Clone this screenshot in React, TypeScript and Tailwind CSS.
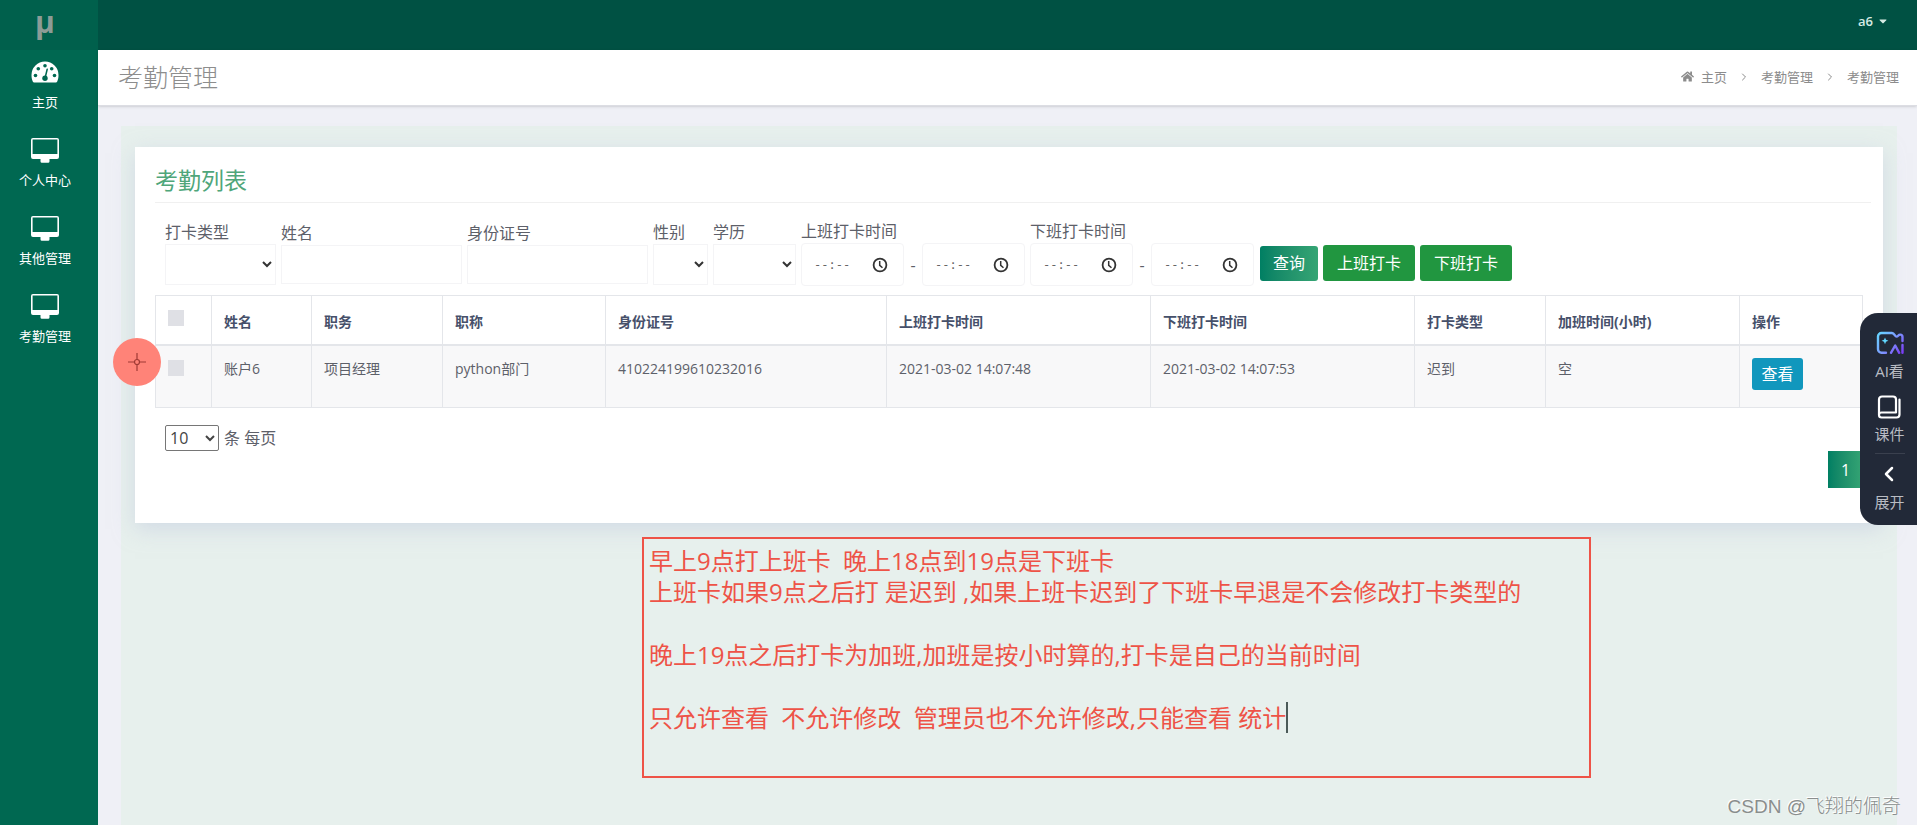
import React from "react";
import { FaHome, FaCaretDown } from "react-icons/fa";
import { ChevronLeft, ChevronRight } from "lucide-react";

function GaugeIcon() {
  return (
    <svg viewBox="0 0 28 22" className="h-[22px] w-7" aria-hidden="true">
      <path d="M14 .5A13.500 13.500 0 0 0 .5 14c0 2.600.5 5 1.400 6.700.2.500.6.800 1.200.8h21.800c.6 0 1-.3 1.200-.8.900-1.700 1.400-4.100 1.400-6.700A13.500 13.500 0 0 0 14 .5Z" fill="#fff" />
      <g fill="#006851">
        <circle cx="4.500" cy="14.500" r="1.800" />
        <circle cx="7.300" cy="7.700" r="1.800" />
        <circle cx="14" cy="4.700" r="1.800" />
        <circle cx="20.700" cy="7.700" r="1.800" />
        <circle cx="23.500" cy="14.500" r="1.800" />
        <circle cx="14" cy="17.200" r="2.700" />
      </g>
      <path d="M14.200 16.500l2-8.300" stroke="#006851" strokeWidth="1.500" strokeLinecap="round" />
    </svg>
  );
}

function MonitorIcon() {
  return (
    <svg viewBox="0 0 28 25" className="h-[25px] w-7" fill="currentColor" aria-hidden="true">
      <path
        fillRule="evenodd"
        d="M2 0h24a2 2 0 0 1 2 2v17a2 2 0 0 1-2 2h-7.500v2.200a1.500 1.500 0 0 1-1 1.600h-7a1.500 1.500 0 0 1-1-1.600V21H2a2 2 0 0 1-2-2V2a2 2 0 0 1 2-2Zm-.4 1.600v14.300h24.800v-14.300H1.600Z"
      />
    </svg>
  );
}

function ClockIcon() {
  return (
    <svg viewBox="0 0 16 16" className="size-4 shrink-0" fill="none" stroke="#333" strokeWidth="1.800" aria-hidden="true">
      <circle cx="8" cy="8" r="6.400" />
      <path d="M7.700 4v4.300l2.800 2.500" strokeWidth="1.500" />
    </svg>
  );
}

function AiIcon() {
  return (
    <svg viewBox="0 0 28 24" className="h-6 w-7" fill="none" strokeWidth="2.400" strokeLinecap="round" strokeLinejoin="round" aria-hidden="true">
      <defs>
        <linearGradient id="ai" x1="0" y1="0" x2="28" y2="24" gradientUnits="userSpaceOnUse">
          <stop offset="0" stopColor="#62e0ff" />
          <stop offset="0.500" stopColor="#7d9bff" />
          <stop offset="1" stopColor="#7a2cf5" />
        </linearGradient>
      </defs>
      <g stroke="url(#ai)">
        <path d="M10 21.800H5.500A3.500 3.500 0 0 1 2 18.300V5.500A3.500 3.500 0 0 1 5.500 2h10.500c2.600 0 2.800 3.600 4.600 3.600 1.500 0 1.600-2 3.600-2 1.600 0 2.300 1 2.300 2.400v4" />
        <path d="M15 21.800l4.200-7.300 4 7.300M26.500 14v7.800" />
      </g>
      <path d="M9 6.400l1 2.400 2.400 1-2.400 1-1 2.400-1-2.400-2.400-1 2.400-1z" fill="#62d8ff" />
    </svg>
  );
}

function BookIcon() {
  return (
    <svg viewBox="0 0 24 24" className="size-6" fill="none" stroke="#fff" strokeWidth="2.200" strokeLinecap="round" strokeLinejoin="round" aria-hidden="true">
      <path d="M2 20V4.500a3 3 0 0 1 3-3h11a3 3 0 0 1 3 3V17.500H4.500A2.500 2.500 0 0 0 2 20a2.500 2.500 0 0 0 2.500 2.500H19.500a3 3 0 0 0 3-3V4.500" />
    </svg>
  );
}

const navItems = ["主页", "个人中心", "其他管理", "考勤管理"];

const columns = [
  { title: "姓名", value: "账户6", width: "w-[100px]" },
  { title: "职务", value: "项目经理", width: "w-[131px]" },
  { title: "职称", value: "python部门", width: "w-[163px]" },
  { title: "身份证号", value: "410224199610232016", width: "w-[281px]" },
  { title: "上班打卡时间", value: "2021-03-02 14:07:48", width: "w-[264px]" },
  { title: "下班打卡时间", value: "2021-03-02 14:07:53", width: "w-[264px]" },
  { title: "打卡类型", value: "迟到", width: "w-[131px]" },
  { title: "加班时间(小时)", value: "空", width: "w-[194px]" },
];

function SelectField({ id, label, width }: { id: string; label: string; width: string }) {
  return (
    <div className="flex flex-col">
      <label htmlFor={id} className="leading-6">{label}</label>
      <select id={id} className={`h-[41px] border border-[#f4f4f6] bg-white text-[#333] ${width}`}>
        <option value=""></option>
      </select>
    </div>
  );
}

function TextField({ id, label }: { id: string; label: string }) {
  return (
    <div className="flex flex-col">
      <label htmlFor={id} className="leading-6">{label}</label>
      <input id={id} type="text" className="h-[39px] w-[181px] border border-[#f4f4f6] bg-white px-3" />
    </div>
  );
}

function TimeInput({ id, label }: { id: string; label?: string }) {
  return (
    <span className="flex h-[43px] w-[103px] items-center rounded border border-[#f4f4f6] bg-white pr-[15px] pl-3">
      <input
        id={id}
        type="text"
        placeholder="--:--"
        aria-label={label}
        className="w-full min-w-0 bg-transparent font-['DejaVu_Sans_Mono',monospace] text-xs text-[#666] placeholder:text-[#666]"
      />
      <ClockIcon />
    </span>
  );
}

function TimeRange({ id, label }: { id: string; label: string }) {
  return (
    <div className="flex flex-col">
      <label htmlFor={id} className="leading-6">{label}</label>
      <div className="flex items-center">
        <TimeInput id={id} />
        <span className="w-[18px] text-center">-</span>
        <TimeInput id={`${id}-end`} label={`${label} -`} />
      </div>
    </div>
  );
}

function TickBox({ label }: { label: string }) {
  return <input type="checkbox" aria-label={label} className="block size-4 appearance-none bg-[#dfe0e5]" />;
}

export default function App() {
  return (
    <div className="relative flex min-h-screen bg-[#eff0f6] font-['Open_Sans','Noto_Sans_CJK_SC',sans-serif] text-base text-[#5d6069]">
      <aside className="w-[98px] shrink-0 bg-[#006851] text-white">
        <div className="flex h-[50px] items-start justify-center bg-[#00604c] pt-[6px] pr-2 text-3xl leading-8 font-bold text-[#8c9c96]">μ</div>
        <nav className="flex flex-col pt-[10px] pr-2">
          {navItems.map((name, i) => (
            <a key={name} href="#" className="flex h-[78px] flex-col items-center text-[13px] leading-5">
              <span className="flex h-6 items-center">
                {i === 0 ? <GaugeIcon /> : <MonitorIcon />}
              </span>
              <span className="mt-2">{name}</span>
            </a>
          ))}
        </nav>
      </aside>

      <div className="flex min-w-0 flex-1 flex-col">
        <header className="flex h-[50px] items-start justify-end bg-[#005143] pt-[11px] pr-7">
          <button className="flex items-center gap-1 text-[13px] leading-5 font-semibold text-[#d5ebe4]">
            a6 <FaCaretDown className="size-3" />
          </button>
        </header>
        <div className="flex h-14 items-center justify-between border-b border-[#dcdde3] bg-white pr-[18px] pb-[2px] pl-5 shadow-sm">
          <h1 className="text-[25px] leading-8 font-light text-[#8d8d8d]">考勤管理</h1>
          <nav className="flex items-center text-[13px] leading-5 text-[#8c8c8c]">
            <FaHome className="mr-[7px] size-[13px]" />
            <a href="#">主页</a>
            <ChevronRight className="mx-[11px] size-3" />
            <a href="#">考勤管理</a>
            <ChevronRight className="mx-[11px] size-3" />
            <span>考勤管理</span>
          </nav>
        </div>

        <main className="mt-5 mr-5 ml-[23px] flex-1 bg-[#e7f0ed] px-[14px] pt-[21px]">
          <section className="h-[376px] bg-white px-5 pt-[17px] shadow-[0_6px_20px_rgba(190,198,222,0.5)]">
            <h2 className="-mr-2 h-[39px] border-b border-[#f0f0f0] text-[23px] leading-8 text-[#4fa67a]">考勤列表</h2>

            <form className="mt-4 flex items-center gap-[5px] pl-[10px]" onSubmit={(e) => e.preventDefault()}>
              <SelectField id="kind" label="打卡类型" width="w-[111px]" />
              <TextField id="name" label="姓名" />
              <TextField id="idno" label="身份证号" />
              <SelectField id="sex" label="性别" width="w-[55px]" />
              <SelectField id="degree" label="学历" width="w-[83px]" />
              <TimeRange id="on" label="上班打卡时间" />
              <TimeRange id="off" label="下班打卡时间" />
              <div className="mb-[5px] ml-px flex items-center gap-[5px] self-end text-white">
                <button className="h-[35px] w-[58px] rounded-[3px] bg-linear-to-r from-[#007f63] to-[#35a574]">查询</button>
                <button className="h-9 w-[92px] rounded-[3px] bg-[#219640]">上班打卡</button>
                <button className="h-9 w-[92px] rounded-[3px] bg-[#219640]">下班打卡</button>
              </div>
            </form>

            <table className="mt-[9px] w-full table-fixed border-collapse text-left text-sm">
              <colgroup>
                <col className="w-[56px]" />
                {columns.map((c) => <col key={c.title} className={c.width} />)}
                <col className="w-[123px]" />
              </colgroup>
              <thead>
                <tr className="h-[49px] border border-b-2 border-[#e4e6ea] text-[#46506a]">
                  <th className="border-r border-[#e4e6ea] px-3 pb-1"><TickBox label="全选" /></th>
                  {columns.map((c) => (
                    <th key={c.title} className="border-r border-[#e4e6ea] px-3 pt-1 font-bold">{c.title}</th>
                  ))}
                  <th className="px-3 pt-1 font-bold">操作</th>
                </tr>
              </thead>
              <tbody>
                <tr className="h-[63px] border border-[#e4e6ea] bg-[#f8f8f9] align-top">
                  <td className="border-r border-[#e4e6ea] px-3 pt-[14px]"><TickBox label="账户6" /></td>
                  {columns.map((c) => (
                    <td key={c.title} className="border-r border-[#e4e6ea] px-3 pt-[13px]">{c.value}</td>
                  ))}
                  <td className="px-3 pt-3">
                    <button className="h-8 w-[51px] rounded-[3px] bg-[#1197bd] text-base leading-6 text-white">查看</button>
                  </td>
                </tr>
              </tbody>
            </table>

            <div className="mt-[17px] flex items-center gap-[5px] pl-[10px]">
              <select id="size" className="h-[26px] w-[54px] rounded-[2px] border border-[#767676] bg-white text-base text-[#444]">
                <option>10</option>
              </select>
              <label htmlFor="size">条 每页</label>
            </div>
            <div className="flex justify-end">
              <button className="h-[37px] w-[35px] bg-linear-to-r from-[#007f63] to-[#35a574] text-white">1</button>
            </div>
          </section>

          <div className="relative mt-[14px] ml-[29%] h-[241px] w-[949px] border-2 border-[#ee5347] bg-[#e7f0ed] pt-[6px] pl-[5px] text-2xl leading-[31px] whitespace-pre text-[#ee5347]">
            <p>早上9点打上班卡  晚上18点到19点是下班卡</p>
            <p>上班卡如果9点之后打 是迟到 ,如果上班卡迟到了下班卡早退是不会修改打卡类型的</p>
            <p className="mt-8">晚上19点之后打卡为加班,加班是按小时算的,打卡是自己的当前时间</p>
            <p className="mt-8 flex">
              只允许查看  不允许修改  管理员也不允许修改,只能查看 统计
              <span className="h-[31px] w-[2px] bg-[#4b5a58]" />
            </p>
          </div>
        </main>
      </div>

      <div className="absolute top-[338px] left-[113px] flex size-12 items-center justify-center rounded-full bg-[#ff8378]">
        <svg viewBox="0 0 18 18" className="size-[18px]" fill="none" stroke="#a03a35" strokeWidth="1.200" aria-hidden="true">
          <circle cx="9" cy="9" r="2.500" />
          <path d="M9 0v6.500M9 11.500V18M0 9h6.500M11.500 9H18" />
        </svg>
      </div>

      <div className="absolute top-[313px] right-0 flex h-[212px] w-[57px] flex-col items-center rounded-l-[18px] bg-[#222938] pt-[18px] pl-[2px] text-[15px] leading-5 text-[#b9bcc3]">
        <button className="flex flex-col items-center gap-[6px]"><AiIcon />AI看</button>
        <button className="mt-[14px] flex flex-col items-center gap-[5px]"><BookIcon />课件</button>
        <hr className="mt-[9px] w-[30px] border-[#3a404e]" />
        <button className="mt-2 flex flex-col items-center gap-[6px]">
          <ChevronLeft className="size-6 text-white" strokeWidth={2.5} />展开
        </button>
      </div>

      <div className="absolute right-4 bottom-1 font-['Liberation_Sans','Noto_Sans_CJK_SC',sans-serif] text-[19px] leading-7 font-light text-[#8a8e8d] [text-shadow:-1px_-1px_0_#fff]">
        CSDN @飞翔的佩奇
      </div>
    </div>
  );
}
